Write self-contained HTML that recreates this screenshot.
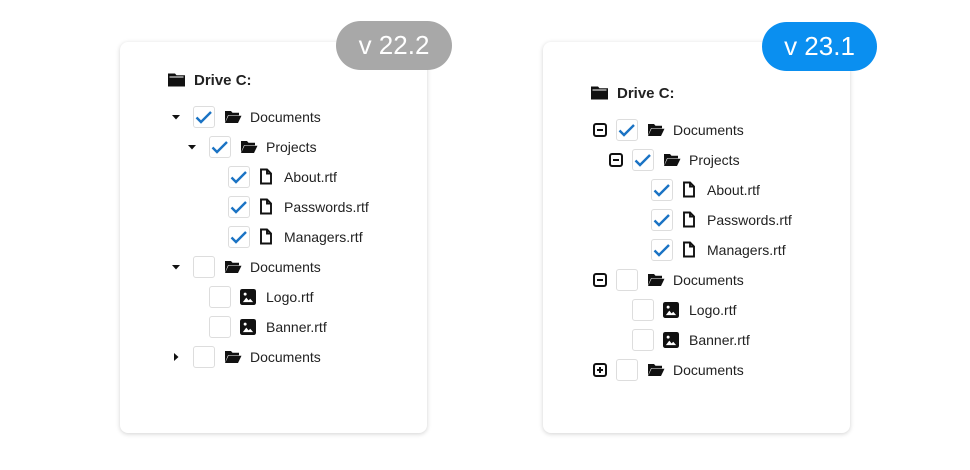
<!DOCTYPE html>
<html><head><meta charset="utf-8"><style>
*{margin:0;padding:0;box-sizing:border-box}
body{width:970px;height:470px;background:#fff;position:relative;overflow:hidden;font-family:"Liberation Sans",Arial,sans-serif;color:#222}
.card{position:absolute;top:42px;width:307px;height:391px;background:#fff;border-radius:8px;box-shadow:0 1px 5px rgba(0,0,0,.18)}
.badge{position:absolute;height:49px;border-radius:25px;color:#fff;font-size:26px;line-height:49px;text-align:center}
.a{position:absolute}
.cb{position:absolute;width:22px;height:22px;border:1px solid #ddd;border-radius:3px;background:#fff}
.cb svg{position:absolute;left:-1px;top:-1px}
.t{position:absolute;font-size:14px;line-height:16px}
.b{font-weight:bold;font-size:15px}
</style></head><body>
<div class="card" style="left:120px"></div>
<div class="card" style="left:543px"></div>
<div class="badge" style="left:336px;top:21px;width:116px;background:#a8a8a8">v 22.2</div>
<div class="badge" style="left:762px;top:22px;width:115px;background:#0a8ff0">v 23.1</div>
<svg width="0" height="0" style="position:absolute">
<defs>
<symbol id="chk" viewBox="0 0 22 22"><path d="M3.5 11.5l4.5 4.5 10-10" fill="none" stroke="#1a73c4" stroke-width="2.4"/></symbol>
<symbol id="fo" viewBox="0 0 18 14"><path d="M1 1h6l1.5 1.8H15v2.5H4L1 12.5z" fill="#111"/><path d="M4.5 5.8H17.5L14 13H1z" fill="#111"/></symbol>
<symbol id="fc" viewBox="0 0 18 14"><path d="M0 0.5h7l1.5 1.8H17V13.5H0z" fill="#111"/><path d="M1.5 4h14" stroke="#fff" stroke-width="1"/></symbol>
<symbol id="doc" viewBox="0 0 14 16"><path d="M2 1h6l4 4v10H2z M8 1v4h4" fill="none" stroke="#111" stroke-width="1.9"/></symbol>
<symbol id="img" viewBox="0 0 14 14"><rect x="0" y="0" width="14" height="14" rx="2" fill="#111"/><path d="M2.5 11.5l3-4 2 2.5 1.5-1.5 2.5 3z" fill="#fff"/><circle cx="4.5" cy="4.5" r="1.3" fill="#fff"/></symbol>
<symbol id="dn" viewBox="0 0 8 5"><path d="M0 0h8L4 4.5z" fill="#111"/></symbol>
<symbol id="rt" viewBox="0 0 5 8"><path d="M0 0v8L4.5 4z" fill="#111"/></symbol>
<symbol id="mi" viewBox="0 0 14 14"><rect x="1" y="1" width="12" height="12" rx="2" fill="none" stroke="#111" stroke-width="2"/><path d="M4 7h6" stroke="#111" stroke-width="2"/></symbol>
<symbol id="pl" viewBox="0 0 14 14"><rect x="1" y="1" width="12" height="12" rx="2" fill="none" stroke="#111" stroke-width="2"/><path d="M4 7h6M7 4v6" stroke="#111" stroke-width="2"/></symbol>
</defs></svg>

<!-- LEFT -->
<svg class="a" style="left:168px;top:73px" width="18" height="14"><use href="#fc"/></svg>
<div class="t b" style="left:194px;top:73px">Drive C:</div>

<svg class="a" style="left:172px;top:115px" width="8" height="5"><use href="#dn"/></svg>
<div class="cb" style="left:193px;top:106px"><svg width="22" height="22"><use href="#chk"/></svg></div>
<svg class="a" style="left:224px;top:110px" width="18" height="14"><use href="#fo"/></svg>
<div class="t" style="left:250px;top:109px">Documents</div>

<svg class="a" style="left:188px;top:145px" width="8" height="5"><use href="#dn"/></svg>
<div class="cb" style="left:209px;top:136px"><svg width="22" height="22"><use href="#chk"/></svg></div>
<svg class="a" style="left:240px;top:140px" width="18" height="14"><use href="#fo"/></svg>
<div class="t" style="left:266px;top:139px">Projects</div>

<div class="cb" style="left:228px;top:166px"><svg width="22" height="22"><use href="#chk"/></svg></div>
<svg class="a" style="left:259px;top:168px" width="14" height="17"><use href="#doc"/></svg>
<div class="t" style="left:284px;top:169px">About.rtf</div>

<div class="cb" style="left:228px;top:196px"><svg width="22" height="22"><use href="#chk"/></svg></div>
<svg class="a" style="left:259px;top:198px" width="14" height="17"><use href="#doc"/></svg>
<div class="t" style="left:284px;top:199px">Passwords.rtf</div>

<div class="cb" style="left:228px;top:226px"><svg width="22" height="22"><use href="#chk"/></svg></div>
<svg class="a" style="left:259px;top:228px" width="14" height="17"><use href="#doc"/></svg>
<div class="t" style="left:284px;top:229px">Managers.rtf</div>

<svg class="a" style="left:172px;top:265px" width="8" height="5"><use href="#dn"/></svg>
<div class="cb" style="left:193px;top:256px"></div>
<svg class="a" style="left:224px;top:260px" width="18" height="14"><use href="#fo"/></svg>
<div class="t" style="left:250px;top:259px">Documents</div>

<div class="cb" style="left:209px;top:286px"></div>
<svg class="a" style="left:240px;top:289px" width="16" height="16"><use href="#img"/></svg>
<div class="t" style="left:266px;top:289px">Logo.rtf</div>

<div class="cb" style="left:209px;top:316px"></div>
<svg class="a" style="left:240px;top:319px" width="16" height="16"><use href="#img"/></svg>
<div class="t" style="left:266px;top:319px">Banner.rtf</div>

<svg class="a" style="left:174px;top:353px" width="5" height="8"><use href="#rt"/></svg>
<div class="cb" style="left:193px;top:346px"></div>
<svg class="a" style="left:224px;top:350px" width="18" height="14"><use href="#fo"/></svg>
<div class="t" style="left:250px;top:349px">Documents</div>

<!-- RIGHT -->
<svg class="a" style="left:591px;top:86px" width="18" height="14"><use href="#fc"/></svg>
<div class="t b" style="left:617px;top:86px">Drive C:</div>

<svg class="a" style="left:593px;top:123px" width="14" height="14"><use href="#mi"/></svg>
<div class="cb" style="left:616px;top:119px"><svg width="22" height="22"><use href="#chk"/></svg></div>
<svg class="a" style="left:647px;top:123px" width="18" height="14"><use href="#fo"/></svg>
<div class="t" style="left:673px;top:122px">Documents</div>

<svg class="a" style="left:609px;top:153px" width="14" height="14"><use href="#mi"/></svg>
<div class="cb" style="left:632px;top:149px"><svg width="22" height="22"><use href="#chk"/></svg></div>
<svg class="a" style="left:663px;top:153px" width="18" height="14"><use href="#fo"/></svg>
<div class="t" style="left:689px;top:152px">Projects</div>

<div class="cb" style="left:651px;top:179px"><svg width="22" height="22"><use href="#chk"/></svg></div>
<svg class="a" style="left:682px;top:181px" width="14" height="17"><use href="#doc"/></svg>
<div class="t" style="left:707px;top:182px">About.rtf</div>

<div class="cb" style="left:651px;top:209px"><svg width="22" height="22"><use href="#chk"/></svg></div>
<svg class="a" style="left:682px;top:211px" width="14" height="17"><use href="#doc"/></svg>
<div class="t" style="left:707px;top:212px">Passwords.rtf</div>

<div class="cb" style="left:651px;top:239px"><svg width="22" height="22"><use href="#chk"/></svg></div>
<svg class="a" style="left:682px;top:241px" width="14" height="17"><use href="#doc"/></svg>
<div class="t" style="left:707px;top:242px">Managers.rtf</div>

<svg class="a" style="left:593px;top:273px" width="14" height="14"><use href="#mi"/></svg>
<div class="cb" style="left:616px;top:269px"></div>
<svg class="a" style="left:647px;top:273px" width="18" height="14"><use href="#fo"/></svg>
<div class="t" style="left:673px;top:272px">Documents</div>

<div class="cb" style="left:632px;top:299px"></div>
<svg class="a" style="left:663px;top:302px" width="16" height="16"><use href="#img"/></svg>
<div class="t" style="left:689px;top:302px">Logo.rtf</div>

<div class="cb" style="left:632px;top:329px"></div>
<svg class="a" style="left:663px;top:332px" width="16" height="16"><use href="#img"/></svg>
<div class="t" style="left:689px;top:332px">Banner.rtf</div>

<svg class="a" style="left:593px;top:363px" width="14" height="14"><use href="#pl"/></svg>
<div class="cb" style="left:616px;top:359px"></div>
<svg class="a" style="left:647px;top:363px" width="18" height="14"><use href="#fo"/></svg>
<div class="t" style="left:673px;top:362px">Documents</div>
</body></html>
